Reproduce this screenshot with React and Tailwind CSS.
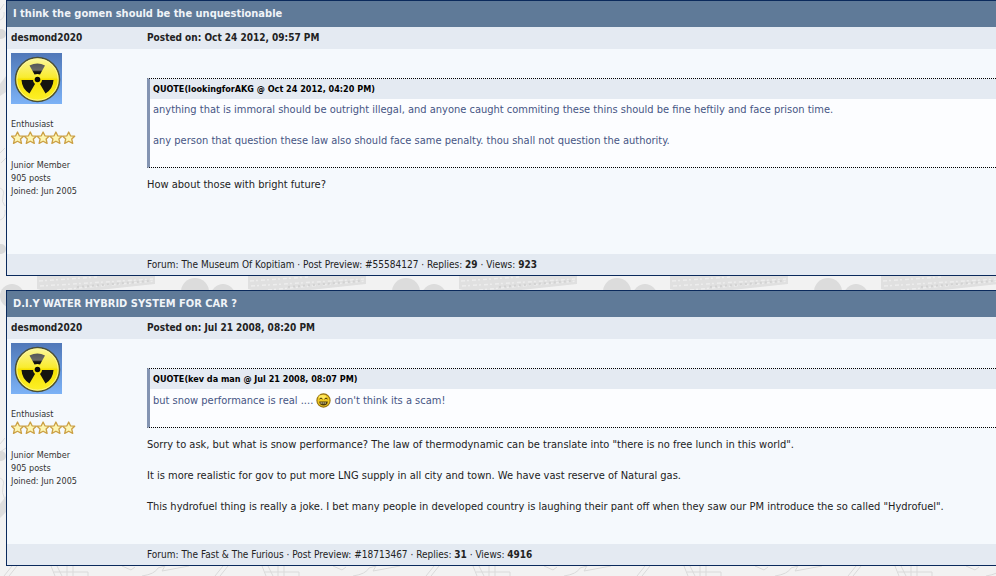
import { useId } from "react";

const posts = [
  {
    title: "I think the gomen should be the unquestionable",
    author: "desmond2020",
    date: "Oct 24 2012, 09:57 PM",
    quote: {
      source: "lookingforAKG @ Oct 24 2012, 04:20 PM",
      lines: [
        "anything that is immoral should be outright illegal, and anyone caught commiting these thins should be fine heftily and face prison time.",
        "any person that question these law also should face same penalty. thou shall not question the authority.",
      ],
    },
    body: ["How about those with bright future?"],
    forum: "The Museum Of Kopitiam",
    preview: "#55584127",
    replies: 29,
    views: 923,
  },
  {
    title: "D.I.Y WATER HYBRID SYSTEM FOR CAR ?",
    author: "desmond2020",
    date: "Jul 21 2008, 08:20 PM",
    quote: {
      source: "kev da man @ Jul 21 2008, 08:07 PM",
      lines: [
        <>
          but snow performance is real .... <Grin /> don't think its a scam!
        </>,
      ],
    },
    body: [
      'Sorry to ask, but what is snow performance? The law of thermodynamic can be translate into "there is no free lunch in this world".',
      "It is more realistic for gov to put more LNG supply in all city and town. We have vast reserve of Natural gas.",
      'This hydrofuel thing is really a joke. I bet many people in developed country is laughing their pant off when they saw our PM introduce the so called "Hydrofuel".',
    ],
    forum: "The Fast & The Furious",
    preview: "#18713467",
    replies: 31,
    views: 4916,
  },
];

function Grin() {
  return (
    <svg viewBox="0 0 15 15" className="my-px inline-block size-[15px] align-middle" aria-hidden="true">
      <circle cx="7.5" cy="7.5" r="6.6" fill="#f0c820" stroke="#94700f" strokeWidth="1.1" />
      <ellipse cx="6.5" cy="4" rx="4" ry="2" fill="#ffe75c" />
      <path d="M3.5 6Q5 4 6.5 6M8.5 6Q10 4 11.5 6" fill="none" stroke="#3c2c05" />
      <path d="M3.2 8.5H11.8Q11.5 12.5 7.5 12.5T3.2 8.5Z" fill="#4b3a0c" />
      <path d="M4.5 10H10.5" stroke="#fff6c0" strokeDasharray="1.4 .6" />
    </svg>
  );
}

function Avatar() {
  const id = useId();
  return (
    <svg viewBox="0 0 51 51" className="size-[51px]" role="img" aria-label="Radiation sign">
      <defs>
        <linearGradient id={`${id}sky`} x2="0" y2="1">
          <stop stopColor="#5078b8" />
          <stop offset="1" stopColor="#7cb2f6" />
        </linearGradient>
        <linearGradient id={`${id}disc`} x2="0" y2="1">
          <stop stopColor="#fbf6a0" />
          <stop offset=".45" stopColor="#f9ec30" />
          <stop offset=".5" stopColor="#f5e000" />
          <stop offset="1" stopColor="#fdf12a" />
        </linearGradient>
        <linearGradient id={`${id}blade`} x2="0" y2="1">
          <stop stopColor="#555558" />
          <stop offset=".6" stopColor="#6a6a66" />
          <stop offset=".75" stopColor="#111" />
        </linearGradient>
      </defs>
      <rect width="51" height="51" fill={`url(#${id}sky)`} />
      <circle cx="26.5" cy="26.5" r="22" fill={`url(#${id}disc)`} stroke="#4a4f38" strokeWidth="1.5" />
      <circle cx="26.5" cy="26.5" r="20.6" fill="none" stroke="#fbf7a0" strokeWidth=".8" />
      <path d="M23.5 21.5L18.5 12.5Q26.5 8.5 34 12.5L29 21.5Q26.5 20.5 23.5 21.5Z" fill={`url(#${id}blade)`} />
      <path d="M22 27H10.5Q11 36 18.500 40.5L24 31Q22 29.5 22 27Z" fill="#15140f" />
      <path d="M31 27H42.5Q42 36 34.5 40.5L29 31Q31 29.5 31 27Z" fill="#15140f" />
      <circle cx="26.5" cy="26.5" r="2.8" fill="#080808" />
    </svg>
  );
}

function Stars() {
  return (
    <svg viewBox="0 0 65 13" className="h-[13px] w-[65px]" role="img" aria-label="5 stars">
      {[0, 1, 2, 3, 4].map((n) => (
        <path
          key={n}
          transform={`translate(${n * 12.8})`}
          d="M6.5 1L8.3 4.8L12.5 5.2L9.5 8L10.5 12.4L6.5 10.2L2.5 12.4L3.5 8L.5 5.2L4.7 4.8Z"
          fill="#fdf6b4"
          stroke="#cba045"
          strokeWidth="1.3"
          strokeLinejoin="round"
        />
      ))}
    </svg>
  );
}

function Backdrop() {
  const id = useId();
  return (
    <svg className="absolute inset-0 -z-10 size-full" aria-hidden="true">
      <defs>
        <pattern id={id} x="37" width="211" height="576" patternUnits="userSpaceOnUse">
          <path d="M0 276H118V284L62 290H4L0 289Z" fill="#e0e0e0" />
          <path d="M2 281L60 277M3 286L116 279M20 290L118 281" stroke="#ededed" strokeWidth="1.5" strokeDasharray="4 2 2 3" />
          <path d="M40 287L112 281" stroke="#d2d2d2" strokeWidth="2" strokeDasharray="2 3" />
          <circle cx="158" cy="292" r="14" fill="#dcdcdc" />
          <circle cx="186" cy="296" r="12" fill="#dcdcdc" />
          <g fill="none" stroke="#dadada">
            <path d="M14 566L18 576M20 566L25 576M30 566V576M36 566V576M17 572H51V576M85 566L94 570L98 567M105 576Q118 574 121 568L128 566L125 571L152 566M178 576L186 566M183 576L191 566" />
          </g>
        </pattern>
      </defs>
      <rect width="100%" height="100%" fill="#f2f2f2" />
      <rect width="100%" height="100%" fill={`url(#${id})`} />
      <g fill="none" stroke="#dcdcdc">
        <path d="M0 10L4 4M0 20Q5 18 4 12M0 153L5 148M1 163L6 158M0 188Q5 190 3 196T5 206M0 220Q6 218 5 210M0 444L5 438M0 452L6 448M0 478Q5 480 3 486T5 500M0 510Q6 508 5 500" />
      </g>
      <circle cx="1" cy="34" r="5" fill="#d9d9d9" />
      <path d="M0 84L6 76V92L0 96ZM0 504L6 496V512L0 518Z" fill="#dedede" />
      <circle cx="1" cy="249" r="5" fill="#d9d9d9" />
      <circle cx="1" cy="456" r="5" fill="#d9d9d9" />
    </svg>
  );
}

function Quote({ quote }) {
  return (
    <blockquote className="border-y border-dotted border-y-black [border-left:3px_solid_#8394b2]">
      <p className="bg-[#e4eaf2] px-[3px] text-[9px] leading-5 font-bold text-black">QUOTE({quote.source})</p>
      <div className="space-y-[15px] bg-[#fcfdff] px-[3px] pt-[3px] pb-[18px] text-[#465584]">
        {quote.lines.map((line, index) => (
          <p key={index} className="leading-4">{line}</p>
        ))}
      </div>
    </blockquote>
  );
}

function Post({ post }) {
  return (
    <article className="border border-r-0 border-[#0b2a5c] bg-[#f5f9fd]">
      <h2 className="bg-[#5f7a98] px-[6px] leading-[26px] font-bold text-[#f0f4f8]">{post.title}</h2>
      <div className="flex bg-[#e4eaf2] px-1 text-[10px] leading-[22px] font-bold">
        <a href="#profile" className="w-[136px] shrink-0">{post.author}</a>
        <p>Posted on: {post.date}</p>
      </div>
      <div className="flex min-h-[205px] pl-1">
        <aside className="w-[136px] shrink-0 pt-1 text-[9px] leading-[13px] text-[#333]">
          <Avatar />
          <p className="mt-[14px]">Enthusiast</p>
          <Stars />
          <p className="mt-[15px]">Junior Member</p>
          <p>905 posts</p>
          <p>Joined: Jun 2005</p>
        </aside>
        <div className="min-w-0 grow pt-[29px]">
          <Quote quote={post.quote} />
          <div className="mt-[9px] space-y-[15px]">
            {post.body.map((line) => (
              <p key={line} className="leading-4">{line}</p>
            ))}
          </div>
        </div>
      </div>
      <footer className="bg-[#e4eaf2] pl-[140px] text-[10px] leading-[21px]">
        Forum: <a href="#forum">{post.forum}</a> · Post Preview: <a href="#post">{post.preview}</a> · Replies: <b>{post.replies}</b> · Views: <b>{post.views}</b>
      </footer>
    </article>
  );
}

export default function App() {
  return (
    <main className="relative isolate min-h-screen space-y-[14px] overflow-hidden pb-[10px] pl-[6px] font-['DejaVu_Sans_Condensed','DejaVu_Sans',sans-serif] text-[11px] text-[#222]">
      <Backdrop />
      {posts.map((post) => (
        <Post key={post.preview} post={post} />
      ))}
    </main>
  );
}
